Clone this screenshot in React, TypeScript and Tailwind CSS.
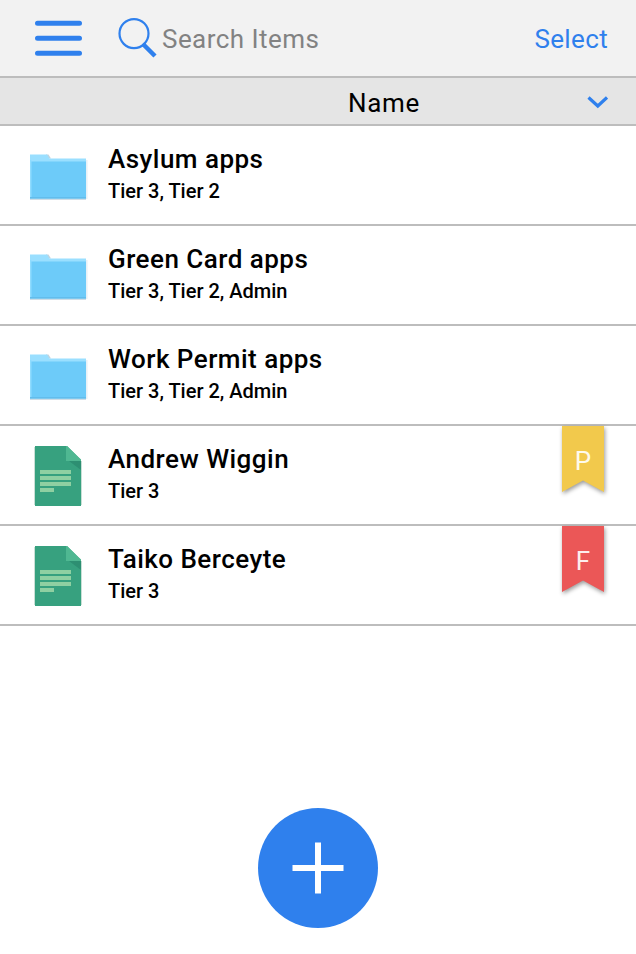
type Item = {
  name: string;
  tiers: string;
  kind: "folder" | "document";
  flag?: { letter: string; color: string };
};

const items: Item[] = [
  { name: "Asylum apps", tiers: "Tier 3, Tier 2", kind: "folder" },
  { name: "Green Card apps", tiers: "Tier 3, Tier 2, Admin", kind: "folder" },
  { name: "Work Permit apps", tiers: "Tier 3, Tier 2, Admin", kind: "folder" },
  { name: "Andrew Wiggin", tiers: "Tier 3", kind: "document", flag: { letter: "P", color: "#f2c94c" } },
  { name: "Taiko Berceyte", tiers: "Tier 3", kind: "document", flag: { letter: "F", color: "#eb5757" } },
];

function FolderIcon() {
  return (
    <svg width="60" height="50" viewBox="0 0 60 50" className="mt-[26px] ml-[29px] shrink-0">
      <path d="M1 46h56v2H1z" fill="#cfdde6" />
      <path d="M57 8h1.600v39H57z" fill="#e8f1f7" />
      <path d="M17 2.500h2.500l2.500 4h-5z" fill="#c3d3dd" />
      <path d="M1 2.500h17l2.500 4H57V14H1z" fill="#9adfff" />
      <path d="M1 9.500h56v37H1z" fill="#6dcbf9" />
      <path d="M1 45h56v1.500H1z" fill="#62bdec" />
      <path d="M1 8h1.500v37H1z" fill="#8fdcff" />
    </svg>
  );
}

function DocumentIcon() {
  return (
    <svg width="50" height="60" viewBox="0 0 50 60" className="mt-5 ml-[34px] shrink-0">
      <path d="M0 1h1.500v58H0zM46.500 15H48v44h-1.500z" fill="#c9dfd6" />
      <path d="M1 0h32l14 14v46H1z" fill="#37a17f" />
      <path d="M32 0h1l14 13.500V15H32z" fill="#4fb892" />
      <path d="M35 15h12v9z" fill="#2d8f72" />
      <path d="M6 24h31v4H6zM6 30h31v4H6zM6 36h31v4H6zM6 42h14v4H6z" fill="#8fd0a2" />
    </svg>
  );
}

function Ribbon({ letter, color }: { letter: string; color: string }) {
  return (
    <div className="absolute top-0 right-[26px] h-[76px] w-[52px]">
      <svg width="52" height="76" viewBox="0 0 52 76" className="block drop-shadow-[1px_2px_2px_rgba(0,0,0,0.4)]">
        <path d="M4 0h42v66L25 54.500 4 66z" fill={color} />
      </svg>
      <span className="absolute top-[20px] left-[4px] w-[42px] text-center text-[26px] leading-[30px] text-white/90">
        {letter}
      </span>
    </div>
  );
}

function Row({ item }: { item: Item }) {
  return (
    <li className="relative flex h-[100px] border-b-2 border-[#bdbdbd]">
      <div className="w-[108px] shrink-0">{item.kind === "folder" ? <FolderIcon /> : <DocumentIcon />}</div>
      <div className="pt-[18px]">
        <div className="text-[26px] leading-[30px] font-medium tracking-[0.480px]">{item.name}</div>
        <div className="mt-[5px] text-[20px] leading-6 font-medium">{item.tiers}</div>
      </div>
      {item.flag && <Ribbon letter={item.flag.letter} color={item.flag.color} />}
    </li>
  );
}

export default function App() {
  return (
    <div className="flex h-[954px] w-[636px] flex-col overflow-hidden bg-white font-[Roboto,sans-serif] text-black">
      <header className="flex h-[78px] shrink-0 items-center border-b-2 border-[#bdbdbd] bg-[#f2f2f2] pr-7">
        <svg width="48" height="38" viewBox="0 0 48 38" className="ml-[34px]">
          <path d="M3.500 4.200h42M3.500 19.200h42M3.500 34.200h42" stroke="#2f80ed" strokeWidth="5" strokeLinecap="round" />
        </svg>
        <svg width="42" height="42" viewBox="0 0 42 42" fill="none" stroke="#2f80ed" className="ml-[34px]">
          <circle cx="18" cy="16.600" r="14.500" strokeWidth="2.200" />
          <path d="M27 26.500l2 2" strokeWidth="3" />
          <path d="M27.500 27.500l11.500 11.500" strokeWidth="4.500" />
        </svg>
        <span className="mt-0.5 ml-[4px] text-[26px] leading-[30px] tracking-[0.450px] text-[#828282]">Search Items</span>
        <span className="mt-0.5 ml-auto text-[26px] leading-[30px] tracking-[0.350px] text-[#2f80ed]">Select</span>
      </header>
      <div className="flex h-12 shrink-0 items-center border-b-2 border-[#bdbdbd] bg-[#e5e5e5] pr-7">
        <span className="ml-[348px] pt-[3px] text-[26px] leading-[30px] tracking-[0.700px]">Name</span>
        <svg width="22" height="14" viewBox="0 0 22 14" className="mt-0.5 ml-auto">
          <path d="M2.500 2.500L11.800 11L21 2.500" fill="none" stroke="#2f80ed" strokeWidth="3.200" />
        </svg>
      </div>
      <ul className="shrink-0">
        {items.map((item) => (
          <Row key={item.name} item={item} />
        ))}
      </ul>
      <button aria-label="Add item" className="mt-[182px] flex size-[120px] shrink-0 items-center justify-center self-center rounded-full bg-[#2f80ed]">
        <svg width="52" height="52" viewBox="0 0 52 52">
          <path d="M26 0.500v51M0.500 26h51" stroke="white" strokeWidth="6" />
        </svg>
      </button>
    </div>
  );
}
